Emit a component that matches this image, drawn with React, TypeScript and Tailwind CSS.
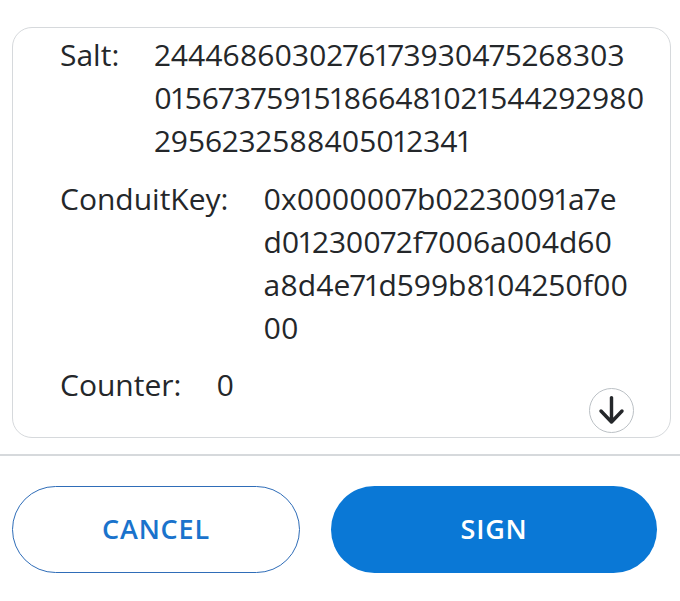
type Field = {
  label: string;
  lines: string[];
};

// Signature request fields, lines kept as they wrap in the dialog
const fields: Field[] = [
  {
    label: 'Salt:',
    lines: ['2444686030276173930475268303', '015673759151866481021544292980', '2956232588405012341'],
  },
  {
    label: 'ConduitKey:',
    lines: ['0x0000007b02230091a7e', 'd01230072f7006a004d60', 'a8d4e71d599b8104250f00', '00'],
  },
  {
    label: 'Counter:',
    lines: ['0'],
  },
];

function FieldRow({ field }: { field: Field }) {
  return (
    <div className="flex gap-[35px]">
      <div className="shrink-0">{field.label}</div>
      <div className="flex flex-col proportional-nums">
        {field.lines.map((line, i) => (
          <span key={i}>{line}</span>
        ))}
      </div>
    </div>
  );
}

function ScrollDownIcon() {
  return (
    <svg width="45" height="45" viewBox="0 0 45 45" fill="none">
      <path
        d="M22.5 9v25M11.5 23l11 11.5 11-11.5"
        stroke="#24272a"
        strokeWidth="3.6"
        strokeLinecap="round"
        strokeLinejoin="round"
      />
    </svg>
  );
}

export default function App() {
  return (
    <div
      className="w-[680px] h-[601px] bg-white text-[#24272a] overflow-hidden"
      style={{ fontFamily: '"Open Sans", "Noto Sans", sans-serif' }}
    >
      {/* Message card */}
      <div className="pt-[27px] pl-[12px] pr-[9px]">
        <div className="relative h-[411px] rounded-[20px] border-[1.5px] border-[#d6d9dc] pl-[47px] pt-[5px] text-[30px] leading-[43px] overflow-hidden">
          <div className="flex flex-col gap-[14.5px]">
            {fields.map((f) => (
              <FieldRow key={f.label} field={f} />
            ))}
          </div>
          <button className="absolute right-[36px] bottom-[4px] flex h-[45px] w-[45px] items-center justify-center rounded-full border-[1.5px] border-[#bbc0c5] bg-white">
            <ScrollDownIcon />
          </button>
        </div>
      </div>

      {/* Divider */}
      <div className="mt-[16px] h-[2px] bg-[#d6d9dc]" />

      {/* Actions */}
      <div className="flex gap-[31px] pl-[12px] pt-[30px]">
        <button className="h-[87px] w-[288px] rounded-full border-[1.5px] border-[#2f6db8] text-[27px] font-semibold tracking-[0.8px] text-[#1a73cc]">
          CANCEL
        </button>
        <button className="h-[87px] w-[326px] rounded-full bg-[#0a78d6] text-[27px] font-semibold tracking-[0.8px] text-white">
          SIGN
        </button>
      </div>
    </div>
  );
}
